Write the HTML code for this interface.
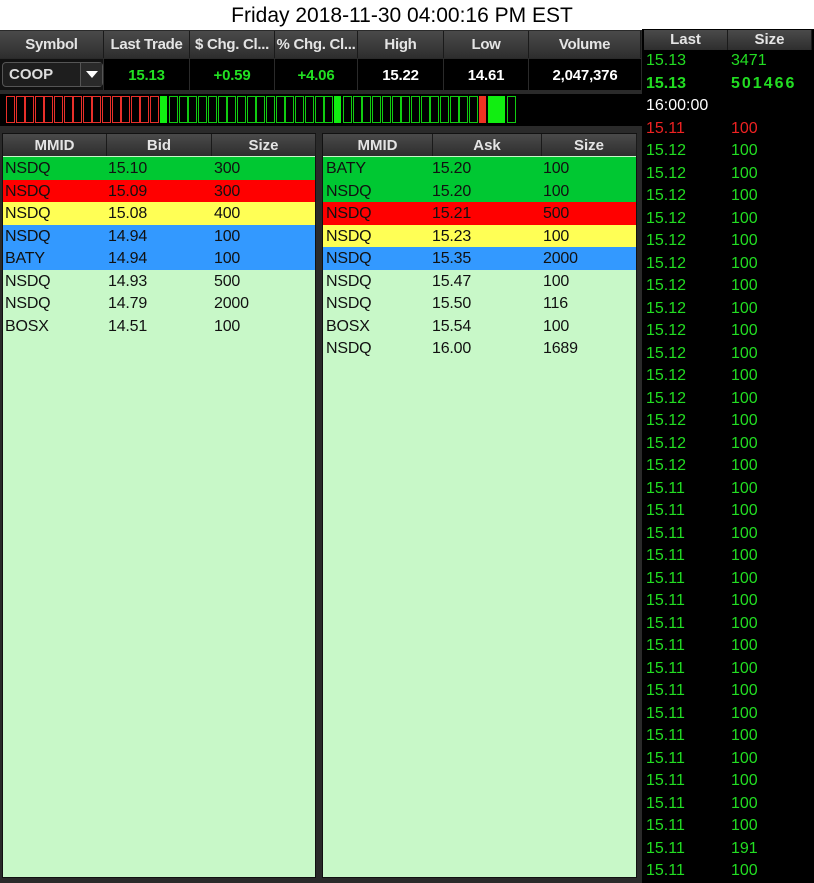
<!DOCTYPE html>
<html><head><meta charset="utf-8"><style>
*{margin:0;padding:0;box-sizing:border-box}
body{width:814px;height:883px;background:#2a2a2a;position:relative;overflow:hidden;font-family:"Liberation Sans",sans-serif}
.a{position:absolute}
.title{left:0;top:0;width:814px;height:30px;background:#fff;color:#000;font-size:21px;text-align:center;line-height:32px;padding-right:10px}
.hc{position:absolute;height:27px;top:31px;background:linear-gradient(#4a4a4a,#2e2e2e);color:#e4e4e4;font-weight:bold;font-size:15px;text-align:center;line-height:27px;border-right:1px solid #1a1a1a;white-space:nowrap;overflow:hidden;letter-spacing:-0.3px}
.vc{position:absolute;top:59px;height:31px;background:#000;color:#fff;font-weight:bold;font-size:15px;text-align:center;line-height:33px;letter-spacing:-0.2px}
.g{color:#22e022}
.bar{top:94px;left:0;width:642px;height:32px;background:#000}
.bx{position:absolute;top:96px;height:27px;border:1.5px solid}
.panel{position:absolute;top:133px;height:745px;background:#c8f8c8;border:1px solid #111}
.ph{position:absolute;top:0;height:22px;background:linear-gradient(#4a4a4a,#2e2e2e);color:#e4e4e4;font-weight:bold;font-size:15px;text-align:center;line-height:23px;border-right:1px solid #1a1a1a}
.row{position:absolute;left:0;width:100%;height:22.5px;font-size:16px;line-height:23px;color:#111;letter-spacing:-0.2px}
.row span{position:absolute}
.rp{position:absolute;left:642px;top:29px;width:172px;height:854px;background:#000}
.rh{position:absolute;top:1px;height:20px;background:linear-gradient(#4a4a4a,#2e2e2e);color:#e4e4e4;font-weight:bold;font-size:15px;text-align:center;line-height:20px;border-right:1px solid #1a1a1a}
.tr{position:absolute;left:0;width:172px;height:22.5px;font-size:16px;line-height:22px;color:#22dd22}
.tr span{position:absolute}
</style></head><body>
<div class="a title">Friday 2018-11-30 04:00:16 PM EST</div>
<div class="hc" style="left:0;width:104px">Symbol</div>
<div class="hc" style="left:104px;width:86px">Last Trade</div>
<div class="hc" style="left:190px;width:85px">$ Chg. Cl...</div>
<div class="hc" style="left:275px;width:83px">% Chg. Cl...</div>
<div class="hc" style="left:358px;width:86px">High</div>
<div class="hc" style="left:444px;width:85px">Low</div>
<div class="hc" style="left:529px;width:112px">Volume</div>
<div class="vc" style="left:0;width:103px;background:#111"></div>
<div class="a" style="left:2px;top:62px;width:101px;height:25px;background:#1e1e1e;border:1px solid #555;border-radius:4px;color:#ddd;font-size:15px;line-height:23px;padding-left:6px;font-weight:bold">COOP<span style="position:absolute;right:0;top:0;width:22px;height:23px;border-left:1px solid #555;background:#2a2a2a"><span style="position:absolute;left:5px;top:8px;border-left:6px solid transparent;border-right:6px solid transparent;border-top:7px solid #fff"></span></span></div>
<div class="vc g" style="left:104px;width:85px">15.13</div>
<div class="vc g" style="left:190px;width:84px">+0.59</div>
<div class="vc g" style="left:275px;width:82px">+4.06</div>
<div class="vc" style="left:358px;width:85px">15.22</div>
<div class="vc" style="left:444px;width:84px">14.61</div>
<div class="vc" style="left:529px;width:112px">2,047,376</div>
<div class="a bar"></div>
<div id="bars"></div>
<script>
var h='';function box(x,w,c,f){h+='<div class="bx" style="left:'+x+'px;width:'+w+'px;border-color:'+c+';background:'+(f?c:'#000')+'"></div>';}
for(var i=0;i<16;i++)box(6+i*9.6,9,'#e8302a',0);
box(160,7,'#11ee11',1);
for(i=0;i<17;i++)box(169+i*9.7,9,'#11cc11',0);
box(334,7,'#11ee11',1);
for(i=0;i<14;i++)box(343+i*9.7,9,'#11cc11',0);
box(479,7,'#ee3322',1);box(488,17,'#11ee11',1);box(507,9,'#11cc11',0);
document.getElementById('bars').innerHTML=h;
</script>
<div class="panel" style="left:2px;width:314px">
<div class="ph" style="left:0;width:104px">MMID</div><div class="ph" style="left:104px;width:105px">Bid</div><div class="ph" style="left:209px;width:104px">Size</div>
<div class="row" style="top:23px;background:#00c832"><span style="left:2px">NSDQ</span><span style="left:105px">15.10</span><span style="left:211px">300</span></div>
<div class="row" style="top:45.5px;background:#ff0000"><span style="left:2px">NSDQ</span><span style="left:105px">15.09</span><span style="left:211px">300</span></div>
<div class="row" style="top:68px;background:#ffff55"><span style="left:2px">NSDQ</span><span style="left:105px">15.08</span><span style="left:211px">400</span></div>
<div class="row" style="top:90.5px;background:#3399ff"><span style="left:2px">NSDQ</span><span style="left:105px">14.94</span><span style="left:211px">100</span></div>
<div class="row" style="top:113px;background:#3399ff"><span style="left:2px">BATY</span><span style="left:105px">14.94</span><span style="left:211px">100</span></div>
<div class="row" style="top:135.5px"><span style="left:2px">NSDQ</span><span style="left:105px">14.93</span><span style="left:211px">500</span></div>
<div class="row" style="top:158px"><span style="left:2px">NSDQ</span><span style="left:105px">14.79</span><span style="left:211px">2000</span></div>
<div class="row" style="top:180.5px"><span style="left:2px">BOSX</span><span style="left:105px">14.51</span><span style="left:211px">100</span></div>
</div>
<div class="panel" style="left:322px;width:315px">
<div class="ph" style="left:0;width:110px">MMID</div><div class="ph" style="left:110px;width:109px">Ask</div><div class="ph" style="left:219px;width:95px">Size</div>
<div class="row" style="top:23px;background:#00c832"><span style="left:3px">BATY</span><span style="left:109px">15.20</span><span style="left:220px">100</span></div>
<div class="row" style="top:45.5px;background:#00c832"><span style="left:3px">NSDQ</span><span style="left:109px">15.20</span><span style="left:220px">100</span></div>
<div class="row" style="top:68px;background:#ff0000"><span style="left:3px">NSDQ</span><span style="left:109px">15.21</span><span style="left:220px">500</span></div>
<div class="row" style="top:90.5px;background:#ffff55"><span style="left:3px">NSDQ</span><span style="left:109px">15.23</span><span style="left:220px">100</span></div>
<div class="row" style="top:113px;background:#3399ff"><span style="left:3px">NSDQ</span><span style="left:109px">15.35</span><span style="left:220px">2000</span></div>
<div class="row" style="top:135.5px"><span style="left:3px">NSDQ</span><span style="left:109px">15.47</span><span style="left:220px">100</span></div>
<div class="row" style="top:158px"><span style="left:3px">NSDQ</span><span style="left:109px">15.50</span><span style="left:220px">116</span></div>
<div class="row" style="top:180.5px"><span style="left:3px">BOSX</span><span style="left:109px">15.54</span><span style="left:220px">100</span></div>
<div class="row" style="top:203px"><span style="left:3px">NSDQ</span><span style="left:109px">16.00</span><span style="left:220px">1689</span></div>
</div>
<div class="rp" id="rp">
<div class="rh" style="left:2px;width:84px">Last</div><div class="rh" style="left:86px;width:84px">Size</div>
</div>
<script>
var r=[['15.13','3471','#22dd22'],['15.13','501466','#22dd22',1],['16:00:00','','#fff'],['15.11','100','#ee2222']];
for(var i=0;i<15;i++)r.push(['15.12','100','#22dd22']);
for(i=0;i<18;i++)r.push(['15.11',i==16?'191':'100','#22dd22']);
var s='';
for(i=0;i<r.length;i++){s+='<div class="tr" style="top:'+(21+i*22.5)+'px;color:'+r[i][2]+(r[i][3]?';font-weight:bold':'')+'"><span style="left:4px">'+r[i][0]+'</span><span style="left:89px'+(r[i][3]?';letter-spacing:2px':'')+'">'+r[i][1]+'</span></div>';}
document.getElementById('rp').innerHTML+=s;
</script>
</body></html>
